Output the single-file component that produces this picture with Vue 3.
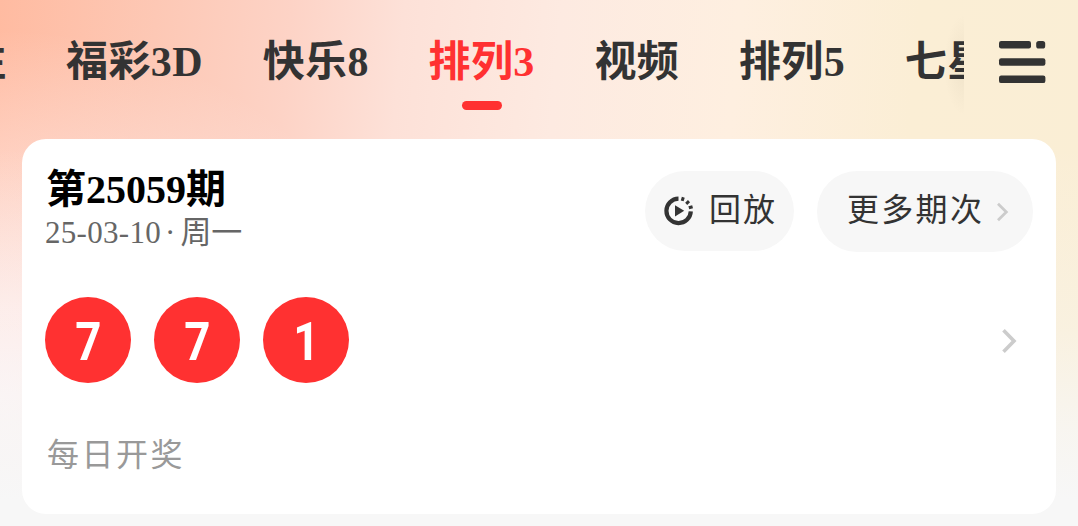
<template>
  <div class="page">
    <header class="topbar">
      <nav class="tabs">
        <button
          v-for="tab in tabs"
          :key="tab"
          class="tab"
          :class="{ active: tab === activeTab }"
          @click="activeTab = tab"
        >
          {{ tab }}
        </button>
      </nav>
      <button class="menu-btn" aria-label="全部彩种">
        <svg width="48" height="44" viewBox="0 0 48 44" fill="#333333">
          <rect x="1" y="1" width="32" height="7.5" rx="2.2" />
          <rect x="38.2" y="1" width="9" height="7.5" rx="2.6" />
          <rect x="1" y="18.3" width="46.4" height="7.5" rx="2.2" />
          <rect x="1" y="35.6" width="46.4" height="7.5" rx="2.2" />
        </svg>
      </button>
    </header>

    <main class="card">
      <div class="card-head">
        <div class="issue">
          <h2 class="issue-title">第{{ draw.issue }}期</h2>
          <p class="issue-date">
            <span class="day">{{ draw.date }}</span><span class="dot">·</span>{{ draw.weekday }}
          </p>
        </div>
        <div class="actions">
          <button class="pill replay">
            <svg width="30" height="30" viewBox="0 0 30 30" fill="none">
              <path d="M14.5 2.7A12.2 12.2 0 1 0 26.8 15.4" stroke="#333333" stroke-width="4.2" />
              <path
                d="M18.2 4.9l1.1-3.6M22.2 7.8l2.8-2.7M24.8 11.8l3.8-1.1"
                stroke="#333333"
                stroke-width="3"
              />
              <path d="M11 9.2L20.2 14.8L11 20.4Z" fill="#333333" />
            </svg>
            <span>回放</span>
          </button>
          <button class="pill more">
            <span>更多期次</span>
            <svg width="13" height="20" viewBox="0 0 13 20" fill="none">
              <path d="M2 1.8L10.3 10L2 18.2" stroke="#cccccc" stroke-width="2.8" />
            </svg>
          </button>
        </div>
      </div>

      <div class="result">
        <ul class="balls">
          <li v-for="(num, index) in draw.numbers" :key="index" class="ball">
            <span>{{ num }}</span>
          </li>
        </ul>
        <svg class="arrow" width="16" height="26" viewBox="0 0 16 26" fill="none">
          <path d="M2.5 2.2L13 13L2.5 23.8" stroke="#cccccc" stroke-width="3.6" />
        </svg>
      </div>

      <p class="schedule">每日开奖</p>
    </main>
  </div>
</template>

<script setup>
import { ref } from 'vue';

const tabs = ['关注', '福彩3D', '快乐8', '排列3', '视频', '排列5', '七星彩'];
const activeTab = ref('排列3');

const draw = ref({
  issue: '25059',
  date: '25-03-10',
  weekday: '周一',
  numbers: [7, 7, 1],
});
</script>

<style>
body {
  background: #f7f7f7;
}
</style>

<style scoped>
.page {
  width: 100%;
  height: 526px;
  box-sizing: border-box;
  padding: 0 22px;
  overflow: hidden;
  background:
    linear-gradient(to bottom, rgba(247, 247, 247, 0) 28%, rgba(247, 247, 247, 0.3) 62%, rgba(247, 247, 247, 0.8) 82%, #f7f7f7 95%),
    radial-gradient(ellipse 420px 370px at 0 400px, #fff1f1 0%, rgba(255, 241, 241, 0.85) 25%, rgba(255, 241, 241, 0.35) 68%, rgba(255, 241, 241, 0) 100%),
    linear-gradient(95deg, #ffbba1 0%, #fdc8b5 14%, #fdd3c6 26%, #fde1d8 36%, #fdeae1 50%, #feefe0 66%, #fbeed5 82%, #faeed5 100%);
  font-family: "Liberation Serif", "Noto Sans CJK SC", serif;
}

button {
  border: none;
  background: none;
  padding: 0;
  font-family: inherit;
  cursor: pointer;
}

.topbar {
  display: flex;
  height: 139px;
  margin: 0 -22px;
}

.tabs {
  display: flex;
  gap: 59.7px;
  width: 964px;
  flex-shrink: 0;
  box-sizing: border-box;
  overflow: hidden;
  background: radial-gradient(ellipse 20px 50px at 100% 50%, rgba(110, 95, 70, 0.08), rgba(110, 95, 70, 0)) no-repeat right 15px / 24px 100px;
}

.tab {
  display: flex;
  flex-direction: column;
  align-items: center;
  flex-shrink: 0;
  height: 111px;
  padding-top: 32px;
  box-sizing: border-box;
  font-size: 42px;
  line-height: 60px;
  font-weight: 700;
  letter-spacing: 0.4px;
  color: #333333;
  white-space: nowrap;
}

.tab:first-child {
  margin-left: -78.5px;
}

.tab.active {
  color: #ff3131;
}

.tab.active::after {
  content: "";
  width: 40px;
  height: 9px;
  margin-top: 9px;
  border-radius: 5px;
  background: #ff3131;
}

.menu-btn {
  align-self: flex-start;
  margin: 40px 0 0 34px;
}

.menu-btn svg,
.pill svg {
  display: block;
}

.card {
  height: 375px;
  box-sizing: border-box;
  padding: 32px 23px 0;
  border-radius: 24px;
  background: #ffffff;
}

.card-head {
  display: flex;
  justify-content: space-between;
  height: 81px;
}

.issue-title {
  margin: -7px 0 0 1px;
  font-size: 40px;
  line-height: 52px;
  font-weight: 700;
  color: #000000;
}

.issue-date {
  margin: -1px 0 0;
  font-size: 31px;
  line-height: 36px;
  color: #666666;
}

.day {
  letter-spacing: 0.3px;
}

.dot {
  margin: 0 5px 0 4px;
}

.actions {
  display: flex;
  align-items: flex-start;
  gap: 23px;
}

.pill {
  display: flex;
  align-items: center;
  height: 80px;
  box-sizing: border-box;
  border-radius: 40px;
  background: #f7f7f7;
  font-size: 32px;
  line-height: 76px;
  letter-spacing: 2px;
  color: #333333;
}

.pill span {
  padding-bottom: 3px;
}

.replay {
  width: 149px;
  padding-left: 19px;
  gap: 15px;
}

.more {
  width: 216px;
  height: 81px;
  padding-left: 30px;
  gap: 13px;
}

.more span {
  letter-spacing: 2.3px;
  margin-right: -1px;
}

.result {
  display: flex;
  align-items: center;
  justify-content: space-between;
  margin-top: 45px;
  padding-right: 16px;
}

.arrow {
  margin-top: 2px;
}

.balls {
  display: flex;
  gap: 23px;
  list-style: none;
  margin: 0;
  padding: 0;
}

.ball {
  display: flex;
  align-items: center;
  justify-content: center;
  width: 86px;
  height: 86px;
  border-radius: 50%;
  background: #ff3131;
  color: #ffffff;
  font-family: Roboto, sans-serif;
  font-size: 53px;
  line-height: 86px;
  font-weight: 700;
}

.ball span {
  transform: scaleX(0.86);
  padding-top: 3px;
}

.schedule {
  margin: 48px 0 0 2px;
  font-size: 32px;
  line-height: 48px;
  letter-spacing: 2.5px;
  color: #999999;
}
</style>
